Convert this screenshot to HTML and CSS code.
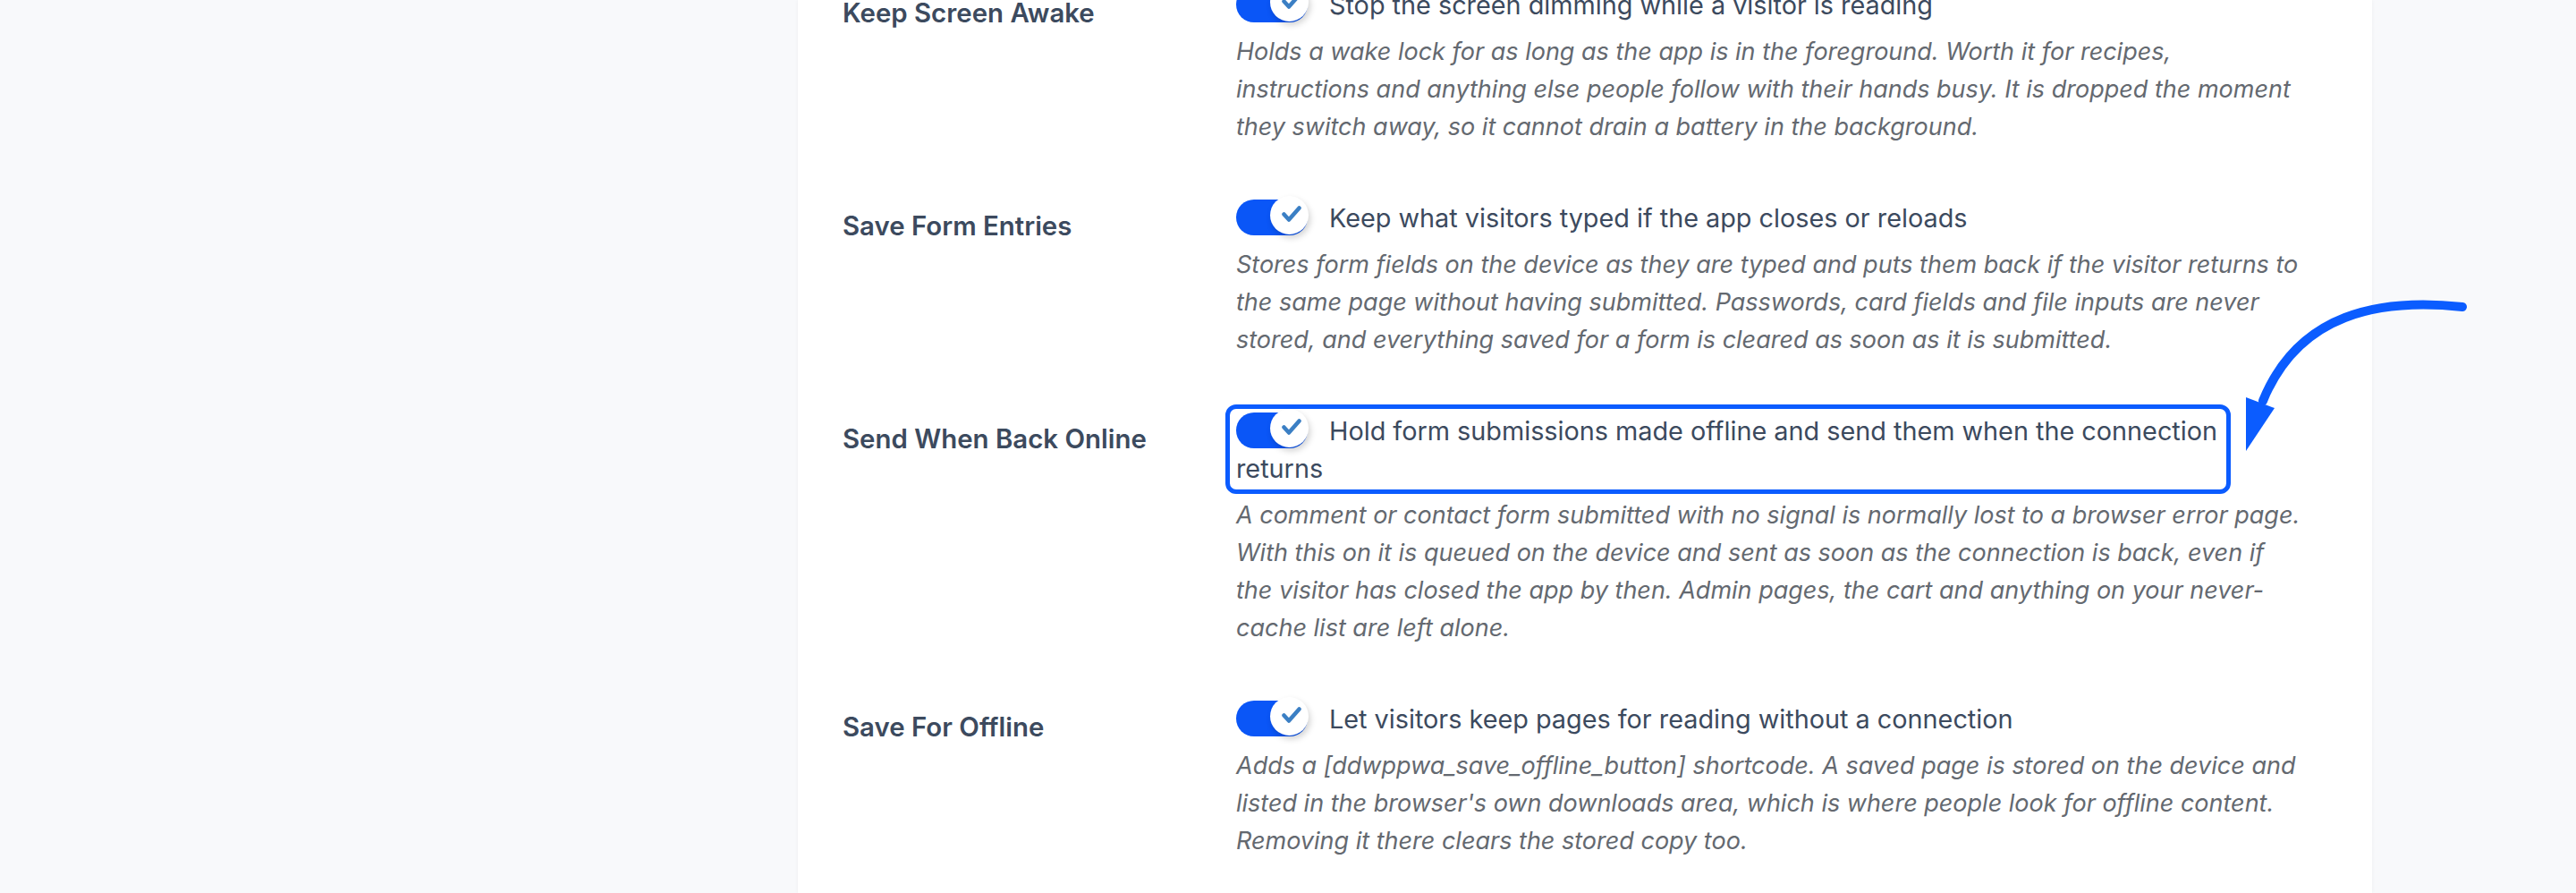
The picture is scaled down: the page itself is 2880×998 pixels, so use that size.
FILE: index.html
```html
<!DOCTYPE html>
<html lang="en">

<head>
  <meta charset="UTF-8">
  <title>Settings</title>
  <link rel="stylesheet" href="styles.css">
</head>

<body>
  <div class="page">
    <aside class="side"></aside>

    <main class="card">
      <div class="settings">

        <div class="row">
          <div class="label">Keep Screen Awake</div>
          <div class="field">
            <label class="toggle">
              <span class="switch"><span class="knob"><svg viewBox="0 0 22 18"><path d="M2.5 9.5 L8 15.5 L19.5 2.5" /></svg></span></span>Stop the screen dimming while a visitor is reading
            </label>
            <p class="description">Holds a wake lock for as long as the app is in the foreground. Worth it for recipes,<br>instructions and anything else people follow with their hands busy. It is dropped the moment<br>they switch away, so it cannot drain a battery in the background.</p>
          </div>
        </div>

        <div class="row">
          <div class="label">Save Form Entries</div>
          <div class="field">
            <label class="toggle">
              <span class="switch"><span class="knob"><svg viewBox="0 0 22 18"><path d="M2.5 9.5 L8 15.5 L19.5 2.5" /></svg></span></span>Keep what visitors typed if the app closes or reloads
            </label>
            <p class="description">Stores form fields on the device as they are typed and puts them back if the visitor returns to<br>the same page without having submitted. Passwords, card fields and file inputs are never<br>stored, and everything saved for a form is cleared as soon as it is submitted.</p>
          </div>
        </div>

        <div class="row">
          <div class="label">Send When Back Online</div>
          <div class="field">
            <div class="highlight"></div>
            <label class="toggle">
              <span class="switch"><span class="knob"><svg viewBox="0 0 22 18"><path d="M2.5 9.5 L8 15.5 L19.5 2.5" /></svg></span></span>Hold form submissions made offline and send them when the connection<br>returns
            </label>
            <p class="description">A comment or contact form submitted with no signal is normally lost to a browser error page.<br>With this on it is queued on the device and sent as soon as the connection is back, even if<br>the visitor has closed the app by then. Admin pages, the cart and anything on your never-<br>cache list are left alone.</p>
          </div>
        </div>

        <div class="row">
          <div class="label">Save For Offline</div>
          <div class="field">
            <label class="toggle">
              <span class="switch"><span class="knob"><svg viewBox="0 0 22 18"><path d="M2.5 9.5 L8 15.5 L19.5 2.5" /></svg></span></span>Let visitors keep pages for reading without a connection
            </label>
            <p class="description">Adds a [ddwppwa_save_offline_button] shortcode. A saved page is stored on the device and<br>listed in the browser's own downloads area, which is where people look for offline content.<br>Removing it there clears the stored copy too.</p>
          </div>
        </div>

      </div>
    </main>

    <!-- annotation arrow pointing at the highlighted option -->
    <svg class="arrow" viewBox="2490 320 280 200">
      <path d="M2753 343 C2660 333 2570 350 2530 448" />
      <polygon points="2511,444 2543,456 2511,504" />
    </svg>
  </div>
</body>

</html>
```

FILE: styles.css
```css
body {
  margin: 0;
  padding: 0;
  background-color: #f8f9fb;
  font-family: Inter, "Noto Sans", sans-serif;
  color: #3c4a5e;
}

.page {
  position: relative;
  display: grid;
  grid-template-columns: 892px 1760px 1fr;
  height: 998px;
  overflow: hidden;
}

.card {
  background-color: #fff;
  box-shadow: 0 0 4px rgba(0, 0, 0, 0.05);
  padding: 0 30px 0 50px;
}

.settings {
  margin-top: -45px;
}

.row {
  display: grid;
  grid-template-columns: 440px 1fr;
}

.label {
  padding: 39px 0 30px 0;
  font-size: 29.4px;
  line-height: 42px;
  font-weight: 600;
}

.field {
  position: relative;
  padding: 30px 0;
}

.toggle {
  display: block;
  font-size: 28.8px;
  line-height: 42px;
  cursor: pointer;
}

.switch {
  position: relative;
  display: inline-block;
  vertical-align: top;
  width: 80px;
  height: 40px;
  margin-right: 24px;
  border-radius: 20px;
  background-color: #0a56f7;
}

.knob {
  position: absolute;
  top: -4px;
  left: 38px;
  width: 43px;
  height: 43px;
  border-radius: 50%;
  background-color: #fff;
  box-shadow: 2px 4px 7px rgba(0, 0, 0, 0.18);
  display: flex;
  align-items: center;
  justify-content: center;
}

.knob svg {
  width: 22px;
  height: 18px;
  margin-left: 5px;
  margin-top: -3px;
  fill: none;
  stroke: #3b7fc4;
  stroke-width: 4.5;
  stroke-linecap: round;
  stroke-linejoin: round;
}

.description {
  margin: 10px 0 0 0;
  font-size: 27px;
  line-height: 42px;
  font-style: italic;
  color: #646970;
}

/* annotation box around the option we are talking about */
.highlight {
  position: absolute;
  top: 21px;
  left: -12px;
  width: 1114px;
  height: 90px;
  border: 5px solid #0b5cff;
  border-radius: 12px;
  pointer-events: none;
}

.arrow {
  position: absolute;
  left: 2490px;
  top: 320px;
  width: 280px;
  height: 200px;
}

.arrow path {
  fill: none;
  stroke: #0b5cff;
  stroke-width: 10;
  stroke-linecap: round;
}

.arrow polygon {
  fill: #0b5cff;
}
```
